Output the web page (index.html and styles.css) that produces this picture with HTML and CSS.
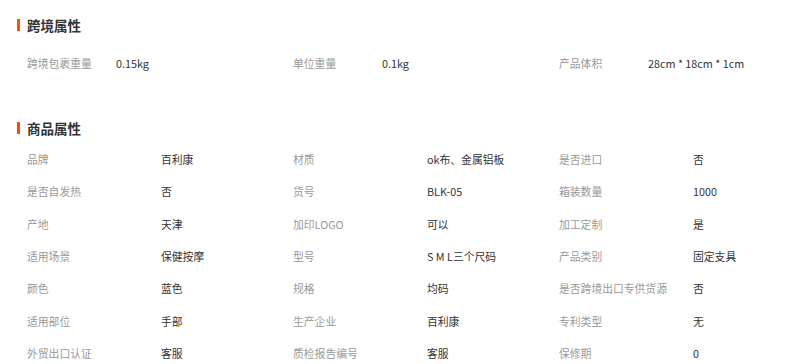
FILE: index.html
```html
<!DOCTYPE html>
<html lang="zh-CN">
<head>
<meta charset="utf-8">
<title>属性</title>
<link rel="stylesheet" href="styles.css">
</head>
<body>
<div class="page">
  <section class="section section-cross">
    <h2 class="heading">跨境属性</h2>
    <div class="grid grid-cross">
      <span class="label">跨境包裹重量</span><span class="value">0.15kg</span>
      <span class="label">单位重量</span><span class="value">0.1kg</span>
      <span class="label">产品体积</span><span class="value">28cm * 18cm * 1cm</span>
    </div>
  </section>
  <section class="section section-goods">
    <h2 class="heading">商品属性</h2>
    <div class="grid grid-goods">
      <span class="label">品牌</span><span class="value">百利康</span>
      <span class="label">材质</span><span class="value">ok布、金属铝板</span>
      <span class="label">是否进口</span><span class="value">否</span>

      <span class="label">是否自发热</span><span class="value">否</span>
      <span class="label">货号</span><span class="value">BLK-05</span>
      <span class="label">箱装数量</span><span class="value">1000</span>

      <span class="label">产地</span><span class="value">天津</span>
      <span class="label">加印LOGO</span><span class="value">可以</span>
      <span class="label">加工定制</span><span class="value">是</span>

      <span class="label">适用场景</span><span class="value">保健按摩</span>
      <span class="label">型号</span><span class="value">S M L三个尺码</span>
      <span class="label">产品类别</span><span class="value">固定支具</span>

      <span class="label">颜色</span><span class="value">蓝色</span>
      <span class="label">规格</span><span class="value">均码</span>
      <span class="label">是否跨境出口专供货源</span><span class="value">否</span>

      <span class="label">适用部位</span><span class="value">手部</span>
      <span class="label">生产企业</span><span class="value">百利康</span>
      <span class="label">专利类型</span><span class="value">无</span>

      <span class="label">外贸出口认证</span><span class="value">客服</span>
      <span class="label">质检报告编号</span><span class="value">客服</span>
      <span class="label">保修期</span><span class="value">0</span>
    </div>
  </section>
</div>
</body>
</html>
```
FILE: styles.css
```css
html, body {
  margin: 0;
  padding: 0;
  background: #fff;
}
body {
  font-family: "Noto Sans CJK SC", "Noto Sans", sans-serif;
  color: #333;
}
.page {
  padding: 15px 0 0 17px;
}
.heading {
  display: flex;
  align-items: center;
  gap: 7px;
  margin: 0;
  height: 20px;
  line-height: 20px;
  font-size: 13.5px;
  font-weight: bold;
  color: #333;
}
.heading::before {
  content: "";
  width: 3px;
  height: 12px;
  background: #ff5000;
}
.grid {
  display: grid;
  margin-left: 10px;
  font-size: 10.8px;
  grid-auto-rows: 32.35px;
  align-items: center;
}
.grid-cross {
  grid-template-columns: 89px 177px 89px 177px 89px 177px;
  margin-top: 12px;
}
.section-goods {
  margin-top: 38.6px;
}
.grid-goods {
  grid-template-columns: 134px 132px 134px 132px 134px 132px;
  margin-top: 4.8px;
}
.label {
  color: #999;
  white-space: nowrap;
}
.value {
  color: #333;
  white-space: nowrap;
}
```
